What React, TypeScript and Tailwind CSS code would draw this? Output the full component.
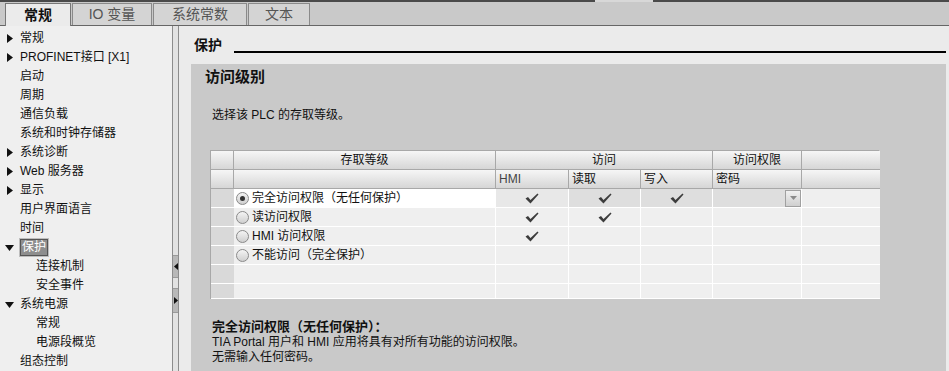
import React from 'react'

type NavItem = { label: string; level: number; arrow?: 'right' | 'down'; selected?: boolean }

const navItems: NavItem[] = [
  { label: '常规', level: 1, arrow: 'right' },
  { label: 'PROFINET接口 [X1]', level: 1, arrow: 'right' },
  { label: '启动', level: 1 },
  { label: '周期', level: 1 },
  { label: '通信负载', level: 1 },
  { label: '系统和时钟存储器', level: 1 },
  { label: '系统诊断', level: 1, arrow: 'right' },
  { label: 'Web 服务器', level: 1, arrow: 'right' },
  { label: '显示', level: 1, arrow: 'right' },
  { label: '用户界面语言', level: 1 },
  { label: '时间', level: 1 },
  { label: '保护', level: 1, arrow: 'down', selected: true },
  { label: '连接机制', level: 2 },
  { label: '安全事件', level: 2 },
  { label: '系统电源', level: 1, arrow: 'down' },
  { label: '常规', level: 2 },
  { label: '电源段概览', level: 2 },
  { label: '组态控制', level: 1 },
]

const rows = [
  { label: '完全访问权限（无任何保护）', hmi: true, read: true, write: true, selected: true },
  { label: '读访问权限', hmi: true, read: true, write: false },
  { label: 'HMI 访问权限', hmi: true, read: false, write: false },
  { label: '不能访问（完全保护）', hmi: false, read: false, write: false },
]

function Arrow({ dir }: { dir: 'right' | 'down' }) {
  return dir === 'right' ? (
    <svg width="6" height="9" viewBox="0 0 6 9" className="shrink-0">
      <path d="M0 0 L6 4.5 L0 9 Z" fill="#111" />
    </svg>
  ) : (
    <svg width="9" height="6" viewBox="0 0 9 6" className="shrink-0">
      <path d="M0 0 L9 0 L4.5 6 Z" fill="#111" />
    </svg>
  )
}

function Check() {
  return (
    <svg width="14" height="11" viewBox="0 0 14 11">
      <path d="M0.5 5.5 L3 4 L5.5 7 L12.5 0.5 L13.5 1.5 L5.5 10.5 Z" fill="#3c3c3c" />
    </svg>
  )
}

function Radio({ on }: { on?: boolean }) {
  return (
    <span className="w-[13px] h-[13px] rounded-full border border-[#8a8a8a] bg-gradient-to-b from-[#f4f4f4] to-[#cfcfcf] flex items-center justify-center shrink-0">
      {on && <span className="w-[5px] h-[5px] rounded-full bg-[#333]" />}
    </span>
  )
}

const headCell = 'bg-gradient-to-b from-[#f6f6f6] via-[#e6e6e6] to-[#d6d6d6] border-r border-b border-[#a8a8a8] flex items-center'

export default function App() {
  return (
    <div
      className="w-[949px] h-[371px] overflow-hidden bg-[#ebebeb] text-[12px] text-[#111] flex flex-col"
      style={{ fontFamily: '"Liberation Sans", "Noto Sans CJK SC", sans-serif' }}
    >
      {/* tab strip */}
      <div className="h-[26px] shrink-0 bg-[#c9c9c9] border-t-[2px] border-[#4a4a4a] border-b border-b-[#666] flex items-end pl-[5px] relative">
        <div className="absolute left-[595px] top-[-2px] w-[58px] h-[2px] bg-[#d8d8d8]" />
        <div className="w-[66px] h-[23px] bg-[#ebebeb] border border-[#777] border-b-0 -mb-px flex items-center justify-center font-bold text-[14px]">
          常规
        </div>
        <div className="w-[80px] h-[22px] ml-[1px] bg-[#d4d4d4] border border-[#8a8a8a] border-b-0 flex items-center justify-center text-[14px] text-[#555]">
          IO 变量
        </div>
        <div className="w-[94px] h-[22px] ml-[1px] bg-[#d4d4d4] border border-[#8a8a8a] border-b-0 flex items-center justify-center text-[14px] text-[#555]">
          系统常数
        </div>
        <div className="w-[62px] h-[22px] ml-[1px] bg-[#d4d4d4] border border-[#8a8a8a] border-b-0 flex items-center justify-center text-[14px] text-[#555]">
          文本
        </div>
      </div>

      <div className="flex flex-1 min-h-0">
        {/* left navigation */}
        <div className="w-[172px] shrink-0 bg-[#efefef] pt-[3px]">
          {navItems.map((item, i) => (
            <div key={i} className="h-[19px] flex items-center relative">
              {item.arrow && (
                <span className={`absolute top-0 bottom-0 flex items-center ${item.arrow === 'down' ? 'left-[5px]' : 'left-[7px]'}`}>
                  <Arrow dir={item.arrow} />
                </span>
              )}
              <span
                className={`${item.level === 2 ? 'ml-[36px]' : 'ml-[20px]'} ${
                  item.selected
                    ? 'bg-[#8e8e8e] text-white border border-[#555] outline outline-1 outline-[#bdbdbd] px-[1px] -ml-[1px] h-[17px] flex items-center'
                    : ''
                } whitespace-nowrap leading-[17px]`}
              >
                {item.label}
              </span>
            </div>
          ))}
        </div>

        {/* splitter */}
        <div className="w-[7px] shrink-0 border-x border-[#8c8c8c] bg-[#e2e2e2] flex flex-col">
          <div className="h-[229px]" />
          <div className="h-[23px] bg-[#b8b8b8] border-y border-[#9a9a9a] flex items-center">
            <svg width="4" height="7" viewBox="0 0 4 7" className="ml-[1px]">
              <path d="M4 0 L0 3.5 L4 7 Z" fill="#111" />
            </svg>
          </div>
          <div className="h-[10px]" />
          <div className="h-[25px] bg-[#b8b8b8] border-y border-[#9a9a9a] flex items-center">
            <svg width="4" height="7" viewBox="0 0 4 7" className="ml-[1px]">
              <path d="M0 0 L4 3.5 L0 7 Z" fill="#111" />
            </svg>
          </div>
        </div>

        {/* right pane */}
        <div className="flex-1 min-w-0 pl-[12px] pr-[3px] flex flex-col">
          <div className="h-[38px] shrink-0 flex items-end pb-[9px]">
            <span className="font-bold text-[14px] leading-[20px] ml-[3px]">保护</span>
            <div className="flex-1 h-[2px] bg-black ml-[12px] mb-[2px]" />
          </div>

          <div className="flex-1 bg-[#c9c9c9] pl-[14px]">
            <div className="font-bold text-[15px] leading-[20px] pt-[3px]">访问级别</div>
            <div className="mt-[20px] pl-[7px] leading-[16px]">选择该 PLC 的存取等级。</div>

            {/* table */}
            <div className="mt-[27px] ml-[5px] w-[669px] grid grid-cols-[23px_262px_73px_72px_72px_89px_78px] border-t border-l border-[#a8a8a8]">
              {/* header row 1 */}
              <div className={`${headCell} h-[19px]`} />
              <div className={`${headCell} h-[19px] justify-center`}>存取等级</div>
              <div className={`${headCell} h-[19px] justify-center col-span-3`}>访问</div>
              <div className={`${headCell} h-[19px] justify-center`}>访问权限</div>
              <div className={`${headCell} h-[19px] border-r-0`} />
              {/* header row 2 */}
              <div className={`${headCell} h-[19px]`} />
              <div className={`${headCell} h-[19px]`} />
              <div className={`${headCell} h-[19px] pl-[3px] text-[#444]`}>HMI</div>
              <div className={`${headCell} h-[19px] pl-[3px]`}>读取</div>
              <div className={`${headCell} h-[19px] pl-[3px]`}>写入</div>
              <div className={`${headCell} h-[19px] pl-[3px]`}>密码</div>
              <div className={`${headCell} h-[19px] border-r-0`} />

              {rows.map((r, i) => {
                const cell = r.selected ? 'bg-[#dedede]' : 'bg-[#efefef]'
                return (
                  <React.Fragment key={i}>
                    <div className="h-[19px] bg-[#d9d9d9] border-b border-white" />
                    <div
                      className={`h-[19px] border-b border-r border-white flex items-center gap-[3px] pl-[2px] ${
                        r.selected ? 'bg-white' : 'bg-[#efefef]'
                      }`}
                    >
                      <Radio on={r.selected} />
                      <span className="whitespace-nowrap">{r.label}</span>
                    </div>
                    <div className={`h-[19px] border-b border-r border-white flex items-center justify-center ${r.selected ? 'bg-[#e8e8e8]' : 'bg-[#efefef]'}`}>
                      {r.hmi && <Check />}
                    </div>
                    <div className={`h-[19px] border-b border-r border-white flex items-center justify-center ${cell}`}>
                      {r.read && <Check />}
                    </div>
                    <div className={`h-[19px] border-b border-r border-white flex items-center justify-center ${cell}`}>
                      {r.write && <Check />}
                    </div>
                    <div className={`h-[19px] border-b border-r border-white flex items-center justify-end ${cell}`}>
                      {r.selected && (
                        <div className="w-[16px] h-[17px] border border-[#a0a0a0] bg-gradient-to-b from-[#f0f0f0] to-[#cfcfcf] flex items-center justify-center">
                          <svg width="7" height="4" viewBox="0 0 7 4">
                            <path d="M0 0 L7 0 L3.5 4 Z" fill="#8a8a8a" />
                          </svg>
                        </div>
                      )}
                    </div>
                    <div className="h-[19px] border-b border-white bg-[#efefef]" />
                  </React.Fragment>
                )
              })}
              {[0, 1].map(k => (
                <React.Fragment key={`e${k}`}>
                  <div className={`${k === 1 ? 'h-[15px]' : 'h-[19px]'} bg-[#d9d9d9] border-b border-white`} />
                  <div className={`${k === 1 ? 'h-[15px]' : 'h-[19px]'} bg-[#efefef] border-b border-r border-white`} />
                  <div className={`${k === 1 ? 'h-[15px]' : 'h-[19px]'} bg-[#efefef] border-b border-r border-white`} />
                  <div className={`${k === 1 ? 'h-[15px]' : 'h-[19px]'} bg-[#efefef] border-b border-r border-white`} />
                  <div className={`${k === 1 ? 'h-[15px]' : 'h-[19px]'} bg-[#efefef] border-b border-r border-white`} />
                  <div className={`${k === 1 ? 'h-[15px]' : 'h-[19px]'} bg-[#efefef] border-b border-r border-white`} />
                  <div className={`${k === 1 ? 'h-[15px]' : 'h-[19px]'} bg-[#efefef] border-b border-white`} />
                </React.Fragment>
              ))}
            </div>

            <div className="mt-[20px] pl-[7px]">
              <div className="font-bold text-[13px] leading-[16px]">完全访问权限（无任何保护）：</div>
              <div className="leading-[15px]">TIA Portal 用户和 HMI 应用将具有对所有功能的访问权限。</div>
              <div className="leading-[15px]">无需输入任何密码。</div>
            </div>
          </div>
        </div>
      </div>
    </div>
  )
}
